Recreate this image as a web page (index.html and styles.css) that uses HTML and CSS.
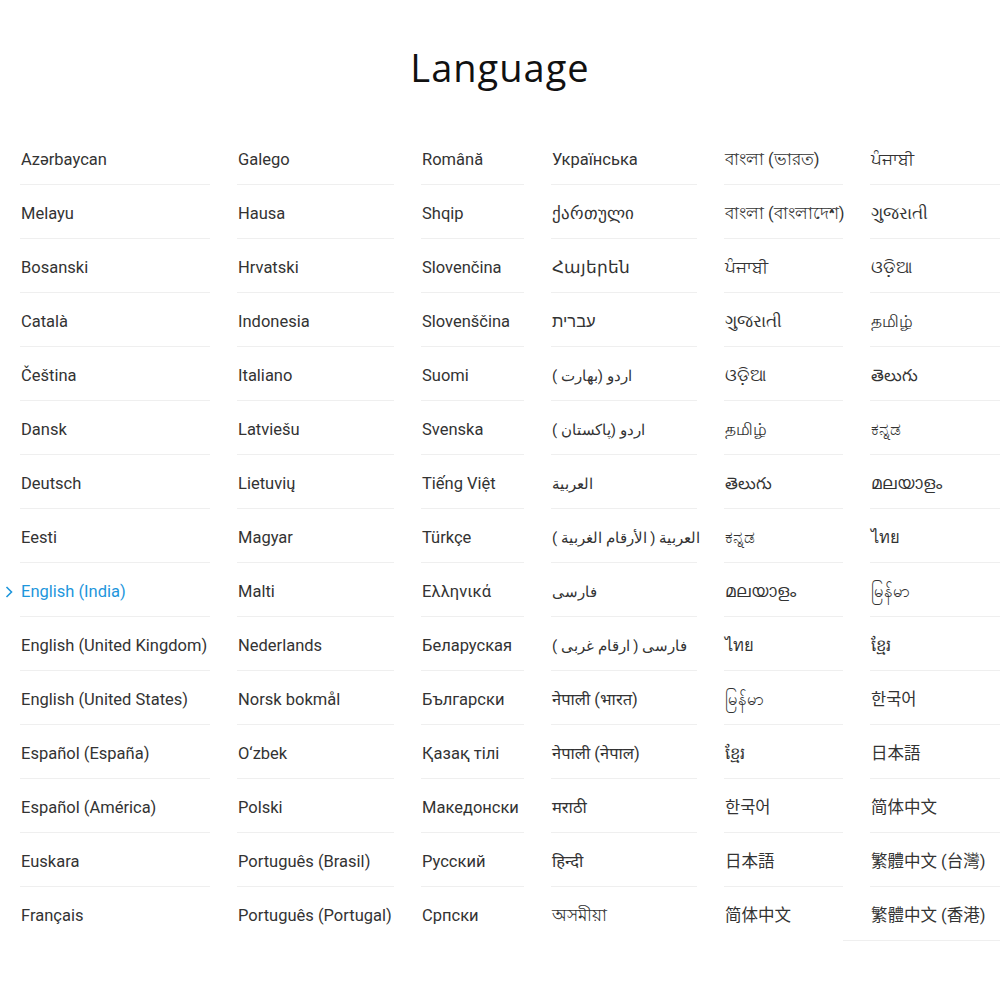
FILE: index.html
```html
<!DOCTYPE html>
<html lang="en">
<head>
    <meta charset="UTF-8">
    <meta name="viewport" content="width=device-width, initial-scale=1.0">
    <title>Language</title>
    <link rel="stylesheet" href="styles.css">
</head>
<body>
    <h1 class="title">Language</h1>

    <div class="lang-list">
        <div class="col col-1">
            <div class="item">Azərbaycan</div>
            <div class="item">Melayu</div>
            <div class="item">Bosanski</div>
            <div class="item">Català</div>
            <div class="item">Čeština</div>
            <div class="item">Dansk</div>
            <div class="item">Deutsch</div>
            <div class="item">Eesti</div>
            <div class="item selected">
                <svg class="check" width="8" height="12" viewBox="0 0 8 12"><path d="M1.5 1 L6.5 6 L1.5 11" fill="none" stroke="currentColor" stroke-width="1.6"/></svg>English (India)
            </div>
            <div class="item">English (United Kingdom)</div>
            <div class="item">English (United States)</div>
            <div class="item">Español (España)</div>
            <div class="item">Español (América)</div>
            <div class="item">Euskara</div>
            <div class="item">Français</div>
        </div>

        <div class="col col-2">
            <div class="item">Galego</div>
            <div class="item">Hausa</div>
            <div class="item">Hrvatski</div>
            <div class="item">Indonesia</div>
            <div class="item">Italiano</div>
            <div class="item">Latviešu</div>
            <div class="item">Lietuvių</div>
            <div class="item">Magyar</div>
            <div class="item">Malti</div>
            <div class="item">Nederlands</div>
            <div class="item">Norsk bokmål</div>
            <div class="item">O‘zbek</div>
            <div class="item">Polski</div>
            <div class="item">Português (Brasil)</div>
            <div class="item">Português (Portugal)</div>
        </div>

        <div class="col col-3">
            <div class="item">Română</div>
            <div class="item">Shqip</div>
            <div class="item">Slovenčina</div>
            <div class="item">Slovenščina</div>
            <div class="item">Suomi</div>
            <div class="item">Svenska</div>
            <div class="item">Tiếng Việt</div>
            <div class="item">Türkçe</div>
            <div class="item">Ελληνικά</div>
            <div class="item">Беларуская</div>
            <div class="item">Български</div>
            <div class="item">Қазақ тілі</div>
            <div class="item">Македонски</div>
            <div class="item">Русский</div>
            <div class="item">Српски</div>
        </div>

        <div class="col col-4">
            <div class="item">Українська</div>
            <div class="item">ქართული</div>
            <div class="item">Հայերեն</div>
            <div class="item"><span dir="rtl">עברית</span></div>
            <div class="item rtl"><span dir="rtl">اردو (بھارت )</span></div>
            <div class="item rtl"><span dir="rtl">اردو (پاکستان )</span></div>
            <div class="item rtl"><span dir="rtl">العربية</span></div>
            <div class="item rtl"><span dir="rtl">العربية ( الأرقام الغربية )</span></div>
            <div class="item rtl"><span dir="rtl">فارسی</span></div>
            <div class="item rtl"><span dir="rtl">فارسی ( ارقام غربی )</span></div>
            <div class="item">नेपाली (भारत)</div>
            <div class="item">नेपाली (नेपाल)</div>
            <div class="item">मराठी</div>
            <div class="item">हिन्दी</div>
            <div class="item">অসমীয়া</div>
        </div>

        <div class="col col-5">
            <div class="item">বাংলা (ভারত)</div>
            <div class="item">বাংলা (বাংলাদেশ)</div>
            <div class="item">ਪੰਜਾਬੀ</div>
            <div class="item">ગુજરાતી</div>
            <div class="item">ଓଡ଼ିଆ</div>
            <div class="item">தமிழ்</div>
            <div class="item">తెలుగు</div>
            <div class="item">ಕನ್ನಡ</div>
            <div class="item">മലയാളം</div>
            <div class="item">ไทย</div>
            <div class="item">မြန်မာ</div>
            <div class="item">ខ្មែរ</div>
            <div class="item" lang="ko">한국어</div>
            <div class="item" lang="ja">日本語</div>
            <div class="item" lang="zh-CN">简体中文</div>
        </div>

        <div class="col col-6">
            <div class="item">ਪੰਜਾਬੀ</div>
            <div class="item">ગુજરાતી</div>
            <div class="item">ଓଡ଼ିଆ</div>
            <div class="item">தமிழ்</div>
            <div class="item">తెలుగు</div>
            <div class="item">ಕನ್ನಡ</div>
            <div class="item">മലയാളം</div>
            <div class="item">ไทย</div>
            <div class="item">မြန်မာ</div>
            <div class="item">ខ្មែរ</div>
            <div class="item" lang="ko">한국어</div>
            <div class="item" lang="ja">日本語</div>
            <div class="item" lang="zh-CN">简体中文</div>
            <div class="item" lang="zh-TW">繁體中文 (台灣)</div>
            <div class="item" lang="zh-HK">繁體中文 (香港)</div>
        </div>
    </div>
</body>
</html>
```

FILE: styles.css
```css
* {
    margin: 0;
    padding: 0;
    box-sizing: border-box;
}

body {
    background-color: #ffffff;
    font-family: Roboto, "Noto Sans", "Noto Sans CJK SC", sans-serif;
    color: #333333;
    overflow: hidden;
}

.title {
    font-family: "Open Sans", "Noto Sans", sans-serif;
    font-weight: 400;
    font-size: 38px;
    line-height: 44px;
    letter-spacing: 1px;
    color: #111111;
    text-align: center;
    padding-top: 45px;
}

.lang-list {
    display: flex;
    gap: 27px;
    margin-top: 42px;
    padding-left: 20px;
}

.col {
    display: flex;
    flex-direction: column;
    flex-shrink: 0;
}

.col-1 { width: 190px; }
.col-2 { width: 157px; }
.col-3 { width: 103px; }
.col-4 { width: 146px; }
.col-5 { width: 119px; }
.col-6 { width: 160px; }

.item {
    position: relative;
    height: 54px;
    padding: 19px 0 0 1px;
    font-size: 16.5px;
    line-height: 20px;
    white-space: nowrap;
    border-bottom: 1px solid #efefef;
}

.col .item:last-child {
    border-bottom-color: transparent;
}

/* the last cell of the right column keeps its rule, drawn a bit wider */
.col-6 .item:last-child::after {
    content: "";
    position: absolute;
    left: -27px;
    right: 0;
    bottom: -1px;
    height: 1px;
    background-color: #efefef;
}

.rtl {
    font-size: 15px;
}

.selected {
    color: #1e96dc;
}

.check {
    position: absolute;
    left: -15px;
    top: 23px;
}

[lang="ko"] { font-family: Roboto, "Noto Sans CJK KR", sans-serif; }
[lang="ja"] { font-family: Roboto, "Noto Sans CJK JP", sans-serif; }
[lang="zh-CN"] { font-family: Roboto, "Noto Sans CJK SC", sans-serif; }
[lang="zh-TW"],
[lang="zh-HK"] { font-family: Roboto, "Noto Sans CJK TC", sans-serif; }
```
